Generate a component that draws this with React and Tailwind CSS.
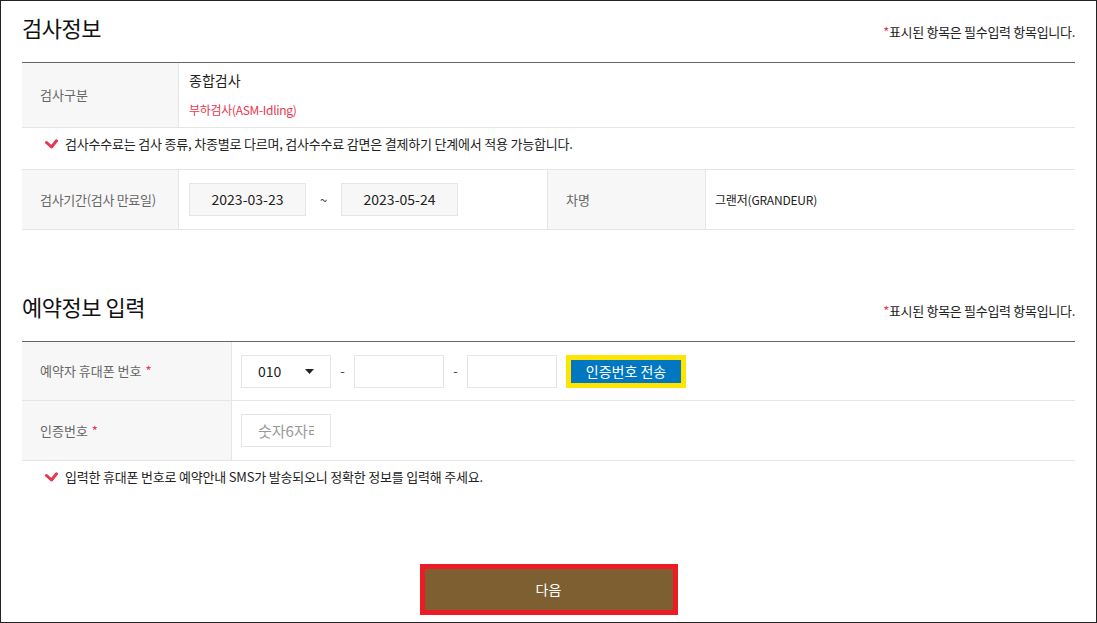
import React from 'react';

const font = { fontFamily: '"Noto Sans CJK KR", "Noto Sans", sans-serif' };

const Check = () => (
  <svg className="w-[13px] h-[10px] shrink-0" viewBox="0 0 13 10" fill="none">
    <path d="M1.5 3.5 L6.5 8 L11.5 1.8" stroke="#e8364e" strokeWidth="3" strokeLinecap="round" strokeLinejoin="round" />
  </svg>
);

const Required = () => <span className="text-[#e8364e] ml-1">*</span>;

const SectionHead = ({ title }) => (
  <div className="flex items-end justify-between h-[61px] pb-[21px]">
    <h2 className="text-[22px] leading-[30px] text-[#111] tracking-[-0.5px] -mb-[1px]">{title}</h2>
    <p className="text-[13px] text-[#222] tracking-[-0.3px]">
      <span className="text-[#e8364e]">*</span>표시된 항목은 필수입력 항목입니다.
    </p>
  </div>
);

const Note = ({ children }) => (
  <div className="flex items-center gap-[7px] pl-[23px] h-[31px] text-[13px] text-[#222] tracking-[-0.2px]">
    <Check />
    <span>{children}</span>
  </div>
);

const App = () => {
  return (
    <div className="w-[1097px] h-[623px] border border-[#222] bg-white px-[21px] overflow-hidden" style={font}>
      {/* 검사정보 */}
      <SectionHead title="검사정보" />
      <div className="border-t border-[#666]">
        <div className="flex h-[65px] border-b border-[#e5e5e5]">
          <div className="w-[157px] bg-[#f7f7f7] border-r border-[#e5e5e5] flex items-center pl-[18px] text-[13px] text-[#666]">
            검사구분
          </div>
          <div className="flex flex-col justify-center pl-[10px] gap-[10px]">
            <span className="text-[14px] text-[#222] leading-[20px]">종합검사</span>
            <span className="text-[12px] text-[#e8364e] leading-[20px] tracking-[-0.3px]">부하검사(ASM-Idling)</span>
          </div>
        </div>
        <div className="border-b border-[#e5e5e5] h-[42px]">
          <Note>검사수수료는 검사 종류, 차종별로 다르며, 검사수수료 감면은 결제하기 단계에서 적용 가능합니다.</Note>
        </div>
        <div className="flex h-[60px] border-b border-[#e5e5e5]">
          <div className="w-[157px] bg-[#f7f7f7] border-r border-[#e5e5e5] flex items-center pl-[18px] text-[13px] text-[#666] tracking-[-0.3px]">
            검사기간(검사 만료일)
          </div>
          <div className="w-[369px] flex items-center pl-[10px] border-r border-[#e5e5e5]">
            <div className="w-[117px] h-[33px] bg-[#f7f7f7] border border-[#e5e5e5] flex items-center justify-center text-[14px] text-[#222]">
              2023-03-23
            </div>
            <span className="w-[35px] text-center text-[13px] text-[#444]">~</span>
            <div className="w-[117px] h-[33px] bg-[#f7f7f7] border border-[#e5e5e5] flex items-center justify-center text-[14px] text-[#222]">
              2023-05-24
            </div>
          </div>
          <div className="w-[158px] bg-[#f7f7f7] border-r border-[#e5e5e5] flex items-center pl-[18px] text-[13px] text-[#666]">
            차명
          </div>
          <div className="flex items-center pl-[9px] text-[12px] text-[#222] tracking-[-0.2px]">
            그랜저(GRANDEUR)
          </div>
        </div>
      </div>

      {/* 예약정보 입력 */}
      <div className="h-[50px]" />
      <SectionHead title="예약정보 입력" />
      <div className="border-t border-[#666]">
        <div className="flex h-[59px] border-b border-[#e5e5e5]">
          <div className="w-[210px] bg-[#f7f7f7] border-r border-[#e5e5e5] flex items-center pl-[18px] text-[13px] text-[#666]">
            예약자 휴대폰 번호<Required />
          </div>
          <div className="flex items-center pl-[9px]">
            <div className="w-[90px] h-[33px] border border-[#e5e5e5] flex items-center justify-between pl-[16px] pr-[16px] text-[14px] text-[#222]">
              <span>010</span>
              <svg className="w-[9px] h-[5px]" viewBox="0 0 9 5"><path d="M0 0 H9 L4.5 5 Z" fill="#222" /></svg>
            </div>
            <span className="w-[23px] text-center text-[13px] text-[#444]">-</span>
            <input className="w-[90px] h-[33px] border border-[#e5e5e5] outline-none" />
            <span className="w-[23px] text-center text-[13px] text-[#444]">-</span>
            <input className="w-[90px] h-[33px] border border-[#e5e5e5] outline-none" />
            <button className="ml-[9px] w-[120px] h-[33px] border-[5px] border-[#ffe400] bg-[#0077c0] text-white text-[14px]">
              인증번호 전송
            </button>
          </div>
        </div>
        <div className="flex h-[60px] border-b border-[#e5e5e5]">
          <div className="w-[210px] bg-[#f7f7f7] border-r border-[#e5e5e5] flex items-center pl-[18px] text-[13px] text-[#666]">
            인증번호<Required />
          </div>
          <div className="flex items-center pl-[9px]">
            <input
              placeholder="숫자6자리"
              className="w-[90px] h-[33px] border border-[#e5e5e5] pl-[16px] pr-[16px] text-[15px] placeholder:text-[#999] outline-none"
            />
          </div>
        </div>
        <Note>입력한 휴대폰 번호로 예약안내 SMS가 발송되오니 정확한 정보를 입력해 주세요.</Note>
      </div>

      {/* 다음 */}
      <div className="flex justify-center pt-[72px]">
        <button className="w-[258px] h-[51px] border-[5px] border-[#ed1c24] bg-[#7d5f32] text-white text-[14px]">
          다음
        </button>
      </div>
    </div>
  );
};

export default App;
